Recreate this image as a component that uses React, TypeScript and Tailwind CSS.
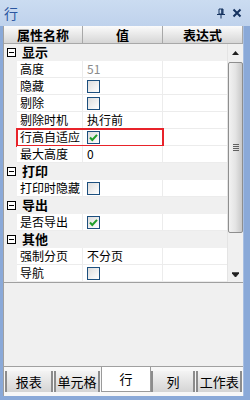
import React from 'react'

type Row =
  | { kind: 'cat'; name: string }
  | { kind: 'prop'; name: string; value?: string; gray?: boolean; check?: boolean; checked?: boolean; hl?: boolean }

const rows: Row[] = [
  { kind: 'cat', name: '显示' },
  { kind: 'prop', name: '高度', value: '51', gray: true },
  { kind: 'prop', name: '隐藏', check: true },
  { kind: 'prop', name: '剔除', check: true },
  { kind: 'prop', name: '剔除时机', value: '执行前' },
  { kind: 'prop', name: '行高自适应', check: true, checked: true, hl: true },
  { kind: 'prop', name: '最大高度', value: '0' },
  { kind: 'cat', name: '打印' },
  { kind: 'prop', name: '打印时隐藏', check: true },
  { kind: 'cat', name: '导出' },
  { kind: 'prop', name: '是否导出', check: true, checked: true },
  { kind: 'cat', name: '其他' },
  { kind: 'prop', name: '强制分页', value: '不分页' },
  { kind: 'prop', name: '导航', check: true },
]

const tabs = ['报表', '单元格', '行', '列', '工作表']

function CheckBox({ checked }: { checked?: boolean }) {
  return (
    <div className="w-[13px] h-[13px] border border-[#1c4f7e] bg-gradient-to-br from-[#dcdcdc] to-white flex items-center justify-center">
      {checked && (
        <svg width="9" height="9" viewBox="0 0 9 9">
          <path d="M1 4.5 L3.3 7 L8 1.8" fill="none" stroke="#1f9e2a" strokeWidth="2" />
        </svg>
      )}
    </div>
  )
}

function Minus() {
  return (
    <div className="w-[9px] h-[9px] border border-black bg-white flex items-center justify-center">
      <div className="w-[5px] h-px bg-black" />
    </div>
  )
}

export default function App() {
  return (
    <div
      className="w-[250px] h-[400px] bg-[#c3d5ed] flex flex-col text-[12px] text-black"
      style={{ fontFamily: '"Noto Sans CJK SC", "Liberation Sans", sans-serif' }}
    >
      <div className="h-[26px] flex items-center pl-[4px] pr-[7px] bg-gradient-to-b from-[#cbdcf1] to-[#bfd2ec]">
        <span className="text-[14px] text-[#2b56a0]">行</span>
        <div className="ml-auto flex items-center gap-[6px] pr-[1px]">
          <svg width="10" height="11" viewBox="0 0 10 11">
            <path d="M3 1 H7 V6 H3 Z" fill="none" stroke="#15325f" strokeWidth="1" />
            <path d="M6 1 V6" stroke="#15325f" strokeWidth="1.6" />
            <path d="M1 6.5 H9" stroke="#15325f" strokeWidth="1" />
            <path d="M5 6.5 V10.5" stroke="#15325f" strokeWidth="1" />
          </svg>
          <svg width="10" height="10" viewBox="0 0 10 10">
            <path d="M1.5 1.5 L8.5 8.5 M8.5 1.5 L1.5 8.5" stroke="#15325f" strokeWidth="2" />
          </svg>
        </div>
      </div>

      <div className="flex-1 flex">
        <div className="w-[4px] bg-[#8aa9d8] border-r border-[#a0a0a0]" />
        <div className="w-[239px] flex flex-col bg-[#f0f0f0]">
          <div className="h-[18px] flex font-bold text-[13px] bg-gradient-to-b from-[#fbfbfb] to-[#d6d6d6] border-b border-[#a8a8a8]">
            <div className="w-[79px] flex items-center justify-center border-r border-[#a8a8a8]">属性名称</div>
            <div className="w-[80px] flex items-center justify-center border-r border-[#a8a8a8]">值</div>
            <div className="flex-1 flex items-center justify-center border-r border-[#a8a8a8]">表达式</div>
          </div>

          <div className="h-[239px] flex border-b border-[#a0a0a0]">
            <div className="w-[223px] flex flex-col">
              {rows.map((r, i) =>
                r.kind === 'cat' ? (
                  <div key={i} className="h-[17px] flex items-center bg-[#f0f0f0] border-b border-[#f0f0f0]">
                    <div className="w-[13px] flex justify-center pl-[1px]">
                      <Minus />
                    </div>
                    <span className="font-bold text-[13px] pl-[5px]">{r.name}</span>
                  </div>
                ) : (
                  <div key={i} className="h-[17px] flex">
                    <div className="w-[13px] bg-[#f0f0f0]" />
                    <div className="flex-1 flex bg-white border-b border-[#ececec] relative">
                      <div className="w-[66px] flex items-center pl-[3px] border-r border-[#ececec] whitespace-nowrap overflow-hidden">
                        {r.name}
                      </div>
                      <div className="w-[80px] flex items-center pl-[4px] border-r border-[#ececec]">
                        {r.check ? (
                          <CheckBox checked={r.checked} />
                        ) : (
                          <span className={r.gray ? 'text-[#8a8a8a]' : 'text-black'}>{r.value}</span>
                        )}
                      </div>
                      <div className="flex-1" />
                      {r.hl && (
                        <div className="absolute left-[-1px] top-[-1px] w-[148px] h-[19px] border-2 border-[#e8232a]" />
                      )}
                    </div>
                  </div>
                )
              )}
            </div>
            <div className="w-[16px] flex flex-col items-center bg-[#f0f0f0] border-l border-[#e4e4e4]">
              <div className="h-[18px] flex items-center justify-center">
                <svg width="7" height="4" viewBox="0 0 7 4">
                  <path d="M0 4 L3.5 0 L7 4 Z" fill="#202020" />
                </svg>
              </div>
              <div className="w-[15px] h-[171px] rounded-[2px] border border-[#8e8e8e] bg-gradient-to-r from-[#f2f2f2] via-[#e4e4e4] to-[#c8c8c8] flex items-center justify-center">
                <div className="flex flex-col gap-[1px]">
                  <div className="w-[6px] h-px bg-[#606060]" />
                  <div className="w-[6px] h-px bg-[#606060]" />
                  <div className="w-[6px] h-px bg-[#606060]" />
                  <div className="w-[6px] h-px bg-[#606060]" />
                </div>
              </div>
              <div className="flex-1" />
              <div className="h-[16px] flex items-center justify-center">
                <svg width="7" height="5" viewBox="0 0 7 5">
                  <path d="M0 0 H7 M0 1 L3.5 5 L7 1 Z" fill="#202020" stroke="#202020" strokeWidth="1" />
                </svg>
              </div>
            </div>
          </div>

          <div className="h-[84px] bg-[#f0f0f0] border-b border-[#a0a0a0]" />

          <div className="flex-1 flex items-start bg-[#f7f7f7] pt-[4px] pl-px">
            {tabs.map((t, i) =>
              t === '行' ? (
                <div
                  key={t}
                  className="w-[50px] h-[25px] -mt-[4px] bg-white border-x border-b border-[#9a9a9a] flex items-center justify-center text-[13px]"
                >
                  {t}
                </div>
              ) : (
                <div
                  key={t}
                  className={`${i === 0 ? 'w-[48px]' : i === 1 ? 'w-[47px]' : i === 3 ? 'w-[45px]' : 'w-[46px]'} h-[21px] mr-px bg-gradient-to-b from-[#f4f4f4] to-[#d4d4d4] border-x-2 border-[#8c8c8c] flex items-center justify-center text-[13px]`}
                >
                  {t}
                </div>
              )
            )}
          </div>
        </div>
        <div className="flex-1 bg-[#8aa9d8] border-l border-[#a8bfe2]" />
      </div>
      <div className="h-[4px] bg-[#8aa9d8]" />
    </div>
  )
}
